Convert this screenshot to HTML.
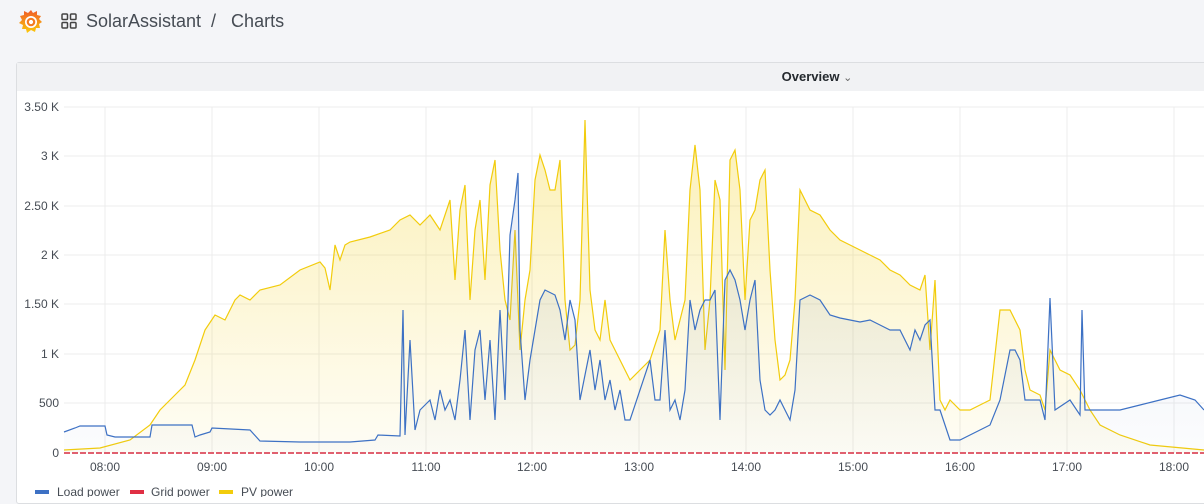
<!DOCTYPE html>
<html><head><meta charset="utf-8"><style>
body{margin:0;width:1204px;height:497px;background:#f4f5f8;font-family:"Liberation Sans",sans-serif;overflow:hidden;position:relative}
.top{position:absolute;left:0;top:0;height:44px;width:1204px}
.crumb{position:absolute;left:86px;top:11px;font-size:18px;color:#464c54}
.panel{position:absolute;left:16px;top:62px;width:1200px;height:440px;background:#fff;border:1px solid #dcdee1;border-radius:3px}
.ph{height:28px;background:#f1f2f4;text-align:center;font-size:13px;font-weight:bold;color:#24292e;line-height:27px}
.ph span{position:relative;left:200px}
</style></head><body>
<div class="top">
<svg style="position:absolute;left:18px;top:8px" width="26" height="28" viewBox="0 0 26 28">
<defs><linearGradient id="g" x1="0" y1="1" x2="0" y2="0"><stop offset="0" stop-color="#fbca0a"/><stop offset="1" stop-color="#f05a28"/></linearGradient></defs>
<path d="M13 2 L15 5 L19 3 L19 7 L23 8 L21 11 L24 14 L21 16 L22 20 L18 20 L17 24 L13 22 L9 25 L8 21 L4 21 L5 17 L1 15 L4 12 L2 8 L6 7 L6 3 L10 5 Z" fill="url(#g)"/>
<circle cx="13" cy="14" r="6" fill="#fff"/><circle cx="13" cy="14" r="3.2" fill="none" stroke="#f47a20" stroke-width="2.2"/>
</svg>
<svg style="position:absolute;left:61px;top:13px" width="16" height="16" viewBox="0 0 16 16" fill="none" stroke="#444" stroke-width="1.5"><rect x="1" y="1" width="5.5" height="5.5" rx="1"/><rect x="9.5" y="1" width="5.5" height="5.5" rx="1"/><rect x="1" y="9.5" width="5.5" height="5.5" rx="1"/><rect x="9.5" y="9.5" width="5.5" height="5.5" rx="1"/></svg>
<div class="crumb">SolarAssistant &nbsp;/ &nbsp; Charts</div>
</div>
<div class="panel"><div class="ph"><span>Overview <span style="font-weight:normal;font-size:11px;color:#666;position:static">&#8964;</span></span></div></div>
<svg style="position:absolute;left:0;top:0" width="1204" height="497">
<g stroke="#ececec" stroke-width="1">
<line x1="64" y1="107" x2="1204" y2="107"/><line x1="64" y1="156" x2="1204" y2="156"/><line x1="64" y1="206" x2="1204" y2="206"/><line x1="64" y1="255" x2="1204" y2="255"/><line x1="64" y1="304" x2="1204" y2="304"/><line x1="64" y1="354" x2="1204" y2="354"/><line x1="64" y1="403" x2="1204" y2="403"/>
<line x1="105" y1="107" x2="105" y2="453"/><line x1="212" y1="107" x2="212" y2="453"/><line x1="319" y1="107" x2="319" y2="453"/><line x1="426" y1="107" x2="426" y2="453"/><line x1="532" y1="107" x2="532" y2="453"/><line x1="639" y1="107" x2="639" y2="453"/><line x1="746" y1="107" x2="746" y2="453"/><line x1="853" y1="107" x2="853" y2="453"/><line x1="960" y1="107" x2="960" y2="453"/><line x1="1067" y1="107" x2="1067" y2="453"/><line x1="1174" y1="107" x2="1174" y2="453"/>
</g>
<g font-size="12" fill="#464c54" text-anchor="end">
<text x="59" y="111">3.50 K</text><text x="59" y="160">3 K</text><text x="59" y="210">2.50 K</text><text x="59" y="259">2 K</text><text x="59" y="308">1.50 K</text><text x="59" y="358">1 K</text><text x="59" y="407">500</text><text x="59" y="457">0</text>
</g>
<g font-size="12" fill="#464c54" text-anchor="middle">
<text x="105" y="471">08:00</text><text x="212" y="471">09:00</text><text x="319" y="471">10:00</text><text x="426" y="471">11:00</text><text x="532" y="471">12:00</text><text x="639" y="471">13:00</text><text x="746" y="471">14:00</text><text x="853" y="471">15:00</text><text x="960" y="471">16:00</text><text x="1067" y="471">17:00</text><text x="1174" y="471">18:00</text>
</g>
<defs>
<linearGradient id="py" x1="0" y1="0" x2="0" y2="1"><stop offset="0" stop-color="#f2cc0c" stop-opacity="0.3"/><stop offset="1" stop-color="#f2cc0c" stop-opacity="0.04"/></linearGradient>
<linearGradient id="pb" x1="0" y1="0" x2="0" y2="1"><stop offset="0" stop-color="#5a7ab8" stop-opacity="0.15"/><stop offset="1" stop-color="#5a7ab8" stop-opacity="0.02"/></linearGradient>
</defs>
<polygon fill="url(#py)" points="64,453 64,450 100,448 130,440 150,425 160,410 175,395 185,385 195,360 205,330 215,315 225,320 235,300 240,295 250,300 260,290 280,285 300,270 320,262 325,268 330,290 335,245 340,260 345,245 350,242 370,237 390,230 400,220 410,215 420,225 430,215 440,230 450,200 455,280 460,210 465,185 470,300 475,230 480,200 485,280 490,185 495,160 500,250 505,300 510,320 515,230 520,350 525,300 530,270 535,180 540,155 545,170 550,190 555,190 560,160 565,300 570,350 575,345 580,300 585,120 590,290 595,330 600,340 605,300 610,340 620,360 630,380 640,370 650,360 660,330 665,230 670,300 675,340 680,320 685,300 690,190 695,145 700,190 705,350 710,300 715,180 720,200 725,370 730,160 735,150 740,190 745,300 750,220 755,210 760,180 765,170 770,270 775,340 780,380 785,375 790,360 795,300 800,190 810,210 820,215 830,230 840,240 850,245 860,250 870,255 880,260 890,270 900,275 910,285 920,290 925,275 930,350 935,280 940,400 945,410 950,400 960,410 970,410 980,405 990,400 1000,310 1010,310 1020,330 1025,370 1030,390 1040,395 1045,410 1050,350 1055,360 1060,370 1070,375 1080,390 1090,410 1100,425 1120,435 1150,445 1204,450 1204,453"/>
<polyline fill="none" stroke="#f2cc0c" stroke-width="1.2" points="64,450 100,448 130,440 150,425 160,410 175,395 185,385 195,360 205,330 215,315 225,320 235,300 240,295 250,300 260,290 280,285 300,270 320,262 325,268 330,290 335,245 340,260 345,245 350,242 370,237 390,230 400,220 410,215 420,225 430,215 440,230 450,200 455,280 460,210 465,185 470,300 475,230 480,200 485,280 490,185 495,160 500,250 505,300 510,320 515,230 520,350 525,300 530,270 535,180 540,155 545,170 550,190 555,190 560,160 565,300 570,350 575,345 580,300 585,120 590,290 595,330 600,340 605,300 610,340 620,360 630,380 640,370 650,360 660,330 665,230 670,300 675,340 680,320 685,300 690,190 695,145 700,190 705,350 710,300 715,180 720,200 725,370 730,160 735,150 740,190 745,300 750,220 755,210 760,180 765,170 770,270 775,340 780,380 785,375 790,360 795,300 800,190 810,210 820,215 830,230 840,240 850,245 860,250 870,255 880,260 890,270 900,275 910,285 920,290 925,275 930,350 935,280 940,400 945,410 950,400 960,410 970,410 980,405 990,400 1000,310 1010,310 1020,330 1025,370 1030,390 1040,395 1045,410 1050,350 1055,360 1060,370 1070,375 1080,390 1090,410 1100,425 1120,435 1150,445 1204,450"/>
<polygon fill="url(#pb)" points="64,453 64,432 75,428 80,426 105,426 107,435 115,437 150,437 152,425 192,425 195,437 200,435 210,432 212,428 250,430 260,441 300,442 350,442 375,440 378,435 400,436 403,310 405,435 410,340 415,430 420,410 430,400 435,420 440,390 445,410 450,400 455,420 460,380 465,330 470,420 475,350 480,330 485,400 490,340 495,420 500,310 505,400 510,235 515,200 518,173 520,330 525,400 530,360 535,330 540,300 545,290 555,295 560,310 565,340 570,300 575,320 580,400 590,350 595,390 600,360 605,400 610,380 615,410 620,390 625,420 630,420 640,390 650,360 655,400 660,400 665,330 670,410 675,400 680,420 685,390 690,300 695,330 700,310 705,300 710,300 715,290 720,420 725,280 730,270 735,280 740,300 745,330 750,300 755,280 760,380 765,410 770,415 775,410 780,400 785,410 790,420 795,390 800,300 810,295 820,300 830,315 840,318 850,320 860,322 870,320 880,325 890,330 900,330 910,350 915,330 920,340 925,325 930,320 935,410 940,410 950,440 960,440 970,435 980,430 990,425 1000,400 1010,350 1015,350 1020,360 1025,400 1030,400 1040,400 1045,420 1050,298 1055,410 1070,400 1080,415 1082,310 1085,410 1100,410 1120,410 1140,405 1160,400 1180,395 1195,400 1204,410 1204,453"/>
<polyline fill="none" stroke="#3d71c4" stroke-width="1.2" points="64,432 75,428 80,426 105,426 107,435 115,437 150,437 152,425 192,425 195,437 200,435 210,432 212,428 250,430 260,441 300,442 350,442 375,440 378,435 400,436 403,310 405,435 410,340 415,430 420,410 430,400 435,420 440,390 445,410 450,400 455,420 460,380 465,330 470,420 475,350 480,330 485,400 490,340 495,420 500,310 505,400 510,235 515,200 518,173 520,330 525,400 530,360 535,330 540,300 545,290 555,295 560,310 565,340 570,300 575,320 580,400 590,350 595,390 600,360 605,400 610,380 615,410 620,390 625,420 630,420 640,390 650,360 655,400 660,400 665,330 670,410 675,400 680,420 685,390 690,300 695,330 700,310 705,300 710,300 715,290 720,420 725,280 730,270 735,280 740,300 745,330 750,300 755,280 760,380 765,410 770,415 775,410 780,400 785,410 790,420 795,390 800,300 810,295 820,300 830,315 840,318 850,320 860,322 870,320 880,325 890,330 900,330 910,350 915,330 920,340 925,325 930,320 935,410 940,410 950,440 960,440 970,435 980,430 990,425 1000,400 1010,350 1015,350 1020,360 1025,400 1030,400 1040,400 1045,420 1050,298 1055,410 1070,400 1080,415 1082,310 1085,410 1100,410 1120,410 1140,405 1160,400 1180,395 1195,400 1204,410"/>
<line x1="64" y1="453" x2="1204" y2="453" stroke="#e0606f" stroke-width="2" stroke-dasharray="6,2"/>
<rect x="35" y="490" width="14" height="4" fill="#3d71c4"/><text x="57" y="496" font-size="12" fill="#464c54">Load power</text>
<rect x="130" y="490" width="14" height="4" fill="#e02f44"/><text x="151" y="496" font-size="12" fill="#464c54">Grid power</text>
<rect x="219" y="490" width="14" height="4" fill="#f2cc0c"/><text x="241" y="496" font-size="12" fill="#464c54">PV power</text>
</svg>
</body></html>
